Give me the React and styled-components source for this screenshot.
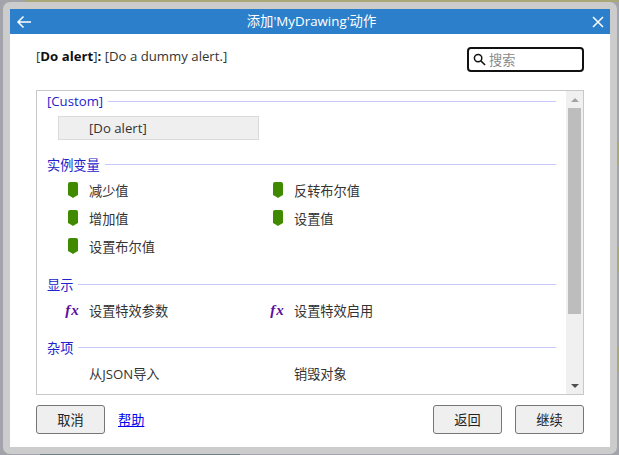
import React from 'react';
import styled, { createGlobalStyle } from 'styled-components';

const GlobalStyle = createGlobalStyle`
  html, body {
    margin: 0;
    padding: 0;
    background: #a3a3ab;
    overflow: hidden;
  }
  body {
    font-family: "Open Sans", "Noto Sans CJK SC", sans-serif;
  }
`;

const Backdrop = styled.div`
  width: 619px;
  height: 455px;
  box-sizing: border-box;
  padding: 2px 2px 1px 3px;
  background-color: #a3a3ab;
  background-image:
    linear-gradient(#a8a878, #a8a878),
    linear-gradient(#6f7f84, #6f7f84),
    linear-gradient(
      transparent 142px, #a8a878 142px 165px, transparent 165px 247px,
      #a8a878 247px 272px, transparent 272px 347px, #a8a878 347px 372px, transparent 372px
    );
  background-repeat: no-repeat;
  background-size: 594px 2px, 200px 1px, 2px 455px;
  background-position: 25px 0, 40px 454px, 617px 0;
`;
const Frame = styled.div`
  height: 100%;
  box-sizing: border-box;
  padding: 7px;
  background: #cccccc;
  border-radius: 7px;
`;
const Dialog = styled.div`
  height: 100%;
  display: flex;
  flex-direction: column;
  background: #fff;
`;
const TitleBar = styled.div`
  height: 25px;
  flex: none;
  display: flex;
  align-items: center;
  justify-content: space-between;
  padding: 0 4px 0 5px;
  background: #2b7fcb;
  color: #fff;
`;
const Title = styled.div`
  margin-left: 2px;
  font-size: 13.33px;
  line-height: 25px;
`;
const TitleIcon = styled.svg`
  display: block;
  width: 16px;
  height: 16px;
  fill: none;
  stroke: #fff;
  stroke-width: 1.5;
`;
const Content = styled.div`
  flex: 1;
  display: flex;
  flex-direction: column;
  padding: 13px 26px 13px 26px;
  font-size: 13.2px;
  color: #333;
`;
const Intro = styled.div`
  height: 43px;
  flex: none;
  display: flex;
  justify-content: space-between;
  align-items: flex-start;
`;
const Description = styled.div`
  line-height: 18px;
  margin-top: 0;
  b { color: #111; font-weight: 700; }
`;
const Search = styled.label`
  width: 117px;
  height: 25px;
  box-sizing: border-box;
  display: flex;
  align-items: center;
  gap: 3px;
  padding: 0 4px;
  border: 2px solid #111;
  border-radius: 4px;
  color: #888;
`;
const ListBox = styled.div`
  height: 305px;
  flex: none;
  display: flex;
  box-sizing: border-box;
  border: 1px solid #c8c8c8;
`;
const List = styled.div`
  flex: 1;
  min-width: 0;
  padding: 0 10px;
  overflow: hidden;
`;
const Scrollbar = styled.div`
  width: 17px;
  flex: none;
  display: flex;
  flex-direction: column;
  align-items: stretch;
  background: #f0f0f0;
`;
const Thumb = styled.div`
  height: 206px;
  margin: 0 2px;
  background: #bdbdbd;
`;
const ScrollArrow = styled.div`
  height: 17px;
  flex: none;
  display: flex;
  align-items: center;
  justify-content: center;
  &::after {
    content: '';
    border-left: 4px solid transparent;
    border-right: 4px solid transparent;
    ${p => (p.$down ? 'border-top: 4px solid #505050;' : 'border-bottom: 4px solid #a3a3a3;')}
  }
`;
const ScrollTrack = styled.div`
  flex: 1;
`;
const Section = styled.div`
  height: ${p => p.$height}px;
`;
const SectionHead = styled.div`
  height: 20px;
  display: flex;
  align-items: center;
  gap: 5px;
  color: #2222cc;
  &::after {
    content: '';
    flex: 1;
    height: 1px;
    background: #c8c8f8;
  }
`;
const Grid = styled.div`
  display: grid;
  grid-template-columns: 205px 205px;
  grid-auto-rows: 28px;
  margin-top: 2px;
`;
const Item = styled.div`
  display: flex;
  align-items: center;
  gap: 8px;
  padding-left: 17px;
`;
const SelectedItem = styled.div`
  width: 201px;
  height: 24px;
  box-sizing: border-box;
  margin: 3px 0 0 11px;
  display: flex;
  align-items: center;
  padding-left: 30px;
  background: #efefef;
  border: 1px solid #dadada;
`;
const IconSlot = styled.span`
  width: 17px;
  height: 18px;
  flex: none;
  display: flex;
  align-items: center;
  justify-content: center;
`;
const Shield = styled.svg`
  width: 10px;
  height: 16px;
  fill: #3f8a00;
`;
const Fx = styled.span`
  font-family: "Liberation Serif", serif;
  font-style: italic;
  font-weight: 700;
  font-size: 15px;
  letter-spacing: 1px;
  color: #5a0fa0;
`;
const Footer = styled.div`
  display: flex;
  align-items: center;
  gap: 13px;
  margin-top: 10px;
`;
const Button = styled.button`
  width: 69px;
  height: 29px;
  box-sizing: border-box;
  padding: 0;
  background: #efefef;
  border: 1px solid #767676;
  border-radius: 3px;
  color: #222;
  font: inherit;
`;
const HelpLink = styled.a`
  color: #0000ee;
  text-decoration: underline;
  margin-right: auto;
`;

const ShieldIcon = () => (
  <Shield viewBox="0 0 10 16">
    <path d="M2 0h6a2 2 0 0 1 2 2v11l-3.5 2-1.5 1-1.5-1L0 13V2a2 2 0 0 1 2-2z" />
  </Shield>
);

const sections = [
  { title: '[Custom]', height: 63, items: [{ label: '[Do alert]', selected: true }] },
  {
    title: '实例变量',
    height: 120,
    items: [
      { label: '减少值', icon: 'shield' },
      { label: '反转布尔值', icon: 'shield' },
      { label: '增加值', icon: 'shield' },
      { label: '设置值', icon: 'shield' },
      { label: '设置布尔值', icon: 'shield' },
    ],
  },
  {
    title: '显示',
    height: 63,
    items: [
      { label: '设置特效参数', icon: 'fx' },
      { label: '设置特效启用', icon: 'fx' },
    ],
  },
  {
    title: '杂项',
    height: 60,
    items: [{ label: '从JSON导入' }, { label: '销毁对象' }],
  },
];

export default function App() {
  return (
    <>
      <GlobalStyle />
      <Backdrop>
        <Frame>
          <Dialog>
            <TitleBar>
              <TitleIcon viewBox="0 0 16 16">
                <path d="M16 8H3M8.5 2.5L3 8l5.5 5.5" />
              </TitleIcon>
              <Title>添加'MyDrawing'动作</Title>
              <TitleIcon viewBox="0 0 16 16">
                <path d="M3 3l10 10M13 3L3 13" />
              </TitleIcon>
            </TitleBar>
            <Content>
              <Intro>
                <Description>
                  [<b>Do alert</b>]<b>:</b> [Do a dummy alert.]
                </Description>
                <Search>
                  <svg width="13" height="13" viewBox="0 0 14 14" fill="none" stroke="#111" strokeWidth="1.6">
                    <circle cx="5.5" cy="5.5" r="4" />
                    <path d="M8.5 8.5L13 13" />
                  </svg>
                  搜索
                </Search>
              </Intro>
              <ListBox>
                <List>
                  {sections.map(section => (
                    <Section key={section.title} $height={section.height}>
                      <SectionHead>{section.title}</SectionHead>
                      <Grid>
                        {section.items.map(item => (
                          item.selected ? (
                            <SelectedItem key={item.label}>{item.label}</SelectedItem>
                          ) : (
                            <Item key={item.label}>
                              <IconSlot>
                                {item.icon === 'shield' && <ShieldIcon />}
                                {item.icon === 'fx' && <Fx>fx</Fx>}
                              </IconSlot>
                              {item.label}
                            </Item>
                          )
                        ))}
                      </Grid>
                    </Section>
                  ))}
                </List>
                <Scrollbar>
                  <ScrollArrow />
                  <Thumb />
                  <ScrollTrack />
                  <ScrollArrow $down />
                </Scrollbar>
              </ListBox>
              <Footer>
                <Button>取消</Button>
                <HelpLink href="#">帮助</HelpLink>
                <Button>返回</Button>
                <Button>继续</Button>
              </Footer>
            </Content>
          </Dialog>
        </Frame>
      </Backdrop>
    </>
  );
}
